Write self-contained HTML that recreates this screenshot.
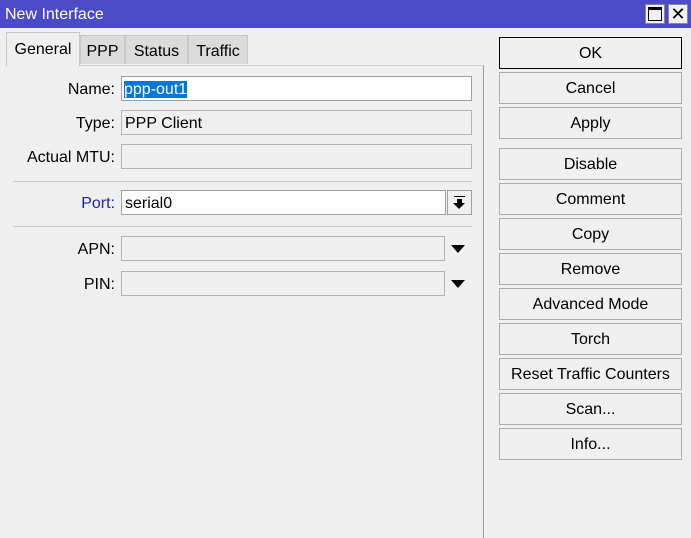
<html style="overflow:hidden;height:538px"><head><style>
body{margin:0;width:691px;height:538px;background:#f0f0f0;font-family:"Liberation Sans",sans-serif;font-size:16px;position:relative;overflow:hidden;color:#000}
.a{position:absolute}
.tb{left:0;top:0;width:691px;height:28px;background:#4b4bc8;color:#fff}
.tab{top:35px;height:29px;background:#dcdcdc;border:1px solid #c8c8c8;border-bottom:none;text-align:center;line-height:31px;box-sizing:border-box}
.lbl{width:115px;text-align:right;left:0;height:25px;line-height:27px}
.in{left:121px;height:25px;box-sizing:border-box;border:1px solid #b4b4b4;background:#f0f0f0;line-height:25px;padding-left:3px}
.btn{left:499px;width:183px;height:32px;box-sizing:border-box;border:1px solid #adadad;background:#f0f0f0;text-align:center;line-height:32px}
.sep{left:13px;width:459px;height:1px;background:#c8c8c8}
.tri{width:0;height:0;border-left:7px solid transparent;border-right:7px solid transparent;border-top:8px solid #000}
</style></head><body>
<div class="a tb"><span class="a" style="left:5px;top:6px">New Interface</span>
<div class="a" style="left:645px;top:4px;width:20px;height:20px;background:#f0f0f0;box-sizing:border-box;border:1px solid #888"><div class="a" style="left:2px;top:2px;width:14px;height:14px;box-sizing:border-box;border:1px solid #000;border-top:3px solid #000"></div></div>
<div class="a" style="left:668px;top:4px;width:20px;height:20px;background:#f0f0f0;box-sizing:border-box;border:1px solid #888;color:#000;text-align:center;line-height:18px;font-size:18px">✕</div>
</div>
<div class="a" style="left:6px;top:65px;width:477px;height:480px;border-top:1px solid #d0d0d0;border-right:1px solid #a0a0a0"></div>
<div class="a tab" style="left:6px;top:32px;width:74px;height:34px;background:#f0f0f0;line-height:33px">General</div>
<div class="a tab" style="left:80px;width:45px">PPP</div>
<div class="a tab" style="left:125px;width:63px">Status</div>
<div class="a tab" style="left:188px;width:60px">Traffic</div>
<div class="a lbl" style="top:76px">Name:</div>
<div class="a in" style="top:76px;width:351px;background:#fff;border-color:#a0a0a0;padding-left:2px"><span style="background:#0078d7;color:#fff">ppp-out1</span></div>
<div class="a lbl" style="top:110px">Type:</div>
<div class="a in" style="top:110px;width:351px">PPP Client</div>
<div class="a lbl" style="top:144px">Actual MTU:</div>
<div class="a in" style="top:144px;width:351px"></div>
<div class="a sep" style="top:181px"></div>
<div class="a lbl" style="top:190px;color:#1e1eb4">Port:</div>
<div class="a in" style="top:190px;width:325px;background:#fff;border-color:#a0a0a0">serial0</div>
<div class="a" style="left:447px;top:190px;width:25px;height:25px;box-sizing:border-box;border:1px solid #a0a0a0">
<div class="a" style="left:6px;top:5px;width:11px;height:1px;background:#000"></div>
<div class="a" style="left:9px;top:8px;width:5px;height:4px;background:#000"></div>
<div class="a tri" style="left:5px;top:12px;border-left-width:6px;border-right-width:6px;border-top-width:6px"></div></div>
<div class="a sep" style="top:226px"></div>
<div class="a lbl" style="top:236px">APN:</div>
<div class="a in" style="top:236px;width:324px"></div>
<div class="a tri" style="left:451px;top:245px"></div>
<div class="a lbl" style="top:271px">PIN:</div>
<div class="a in" style="top:271px;width:324px"></div>
<div class="a tri" style="left:451px;top:280px"></div>
<div class="a btn" style="top:37px;border-color:#000">OK</div>
<div class="a btn" style="top:72px">Cancel</div>
<div class="a btn" style="top:107px">Apply</div>
<div class="a btn" style="top:148px">Disable</div>
<div class="a btn" style="top:183px">Comment</div>
<div class="a btn" style="top:218px">Copy</div>
<div class="a btn" style="top:253px">Remove</div>
<div class="a btn" style="top:288px">Advanced Mode</div>
<div class="a btn" style="top:323px">Torch</div>
<div class="a btn" style="top:358px">Reset Traffic Counters</div>
<div class="a btn" style="top:393px">Scan...</div>
<div class="a btn" style="top:428px">Info...</div>
</body></html>
